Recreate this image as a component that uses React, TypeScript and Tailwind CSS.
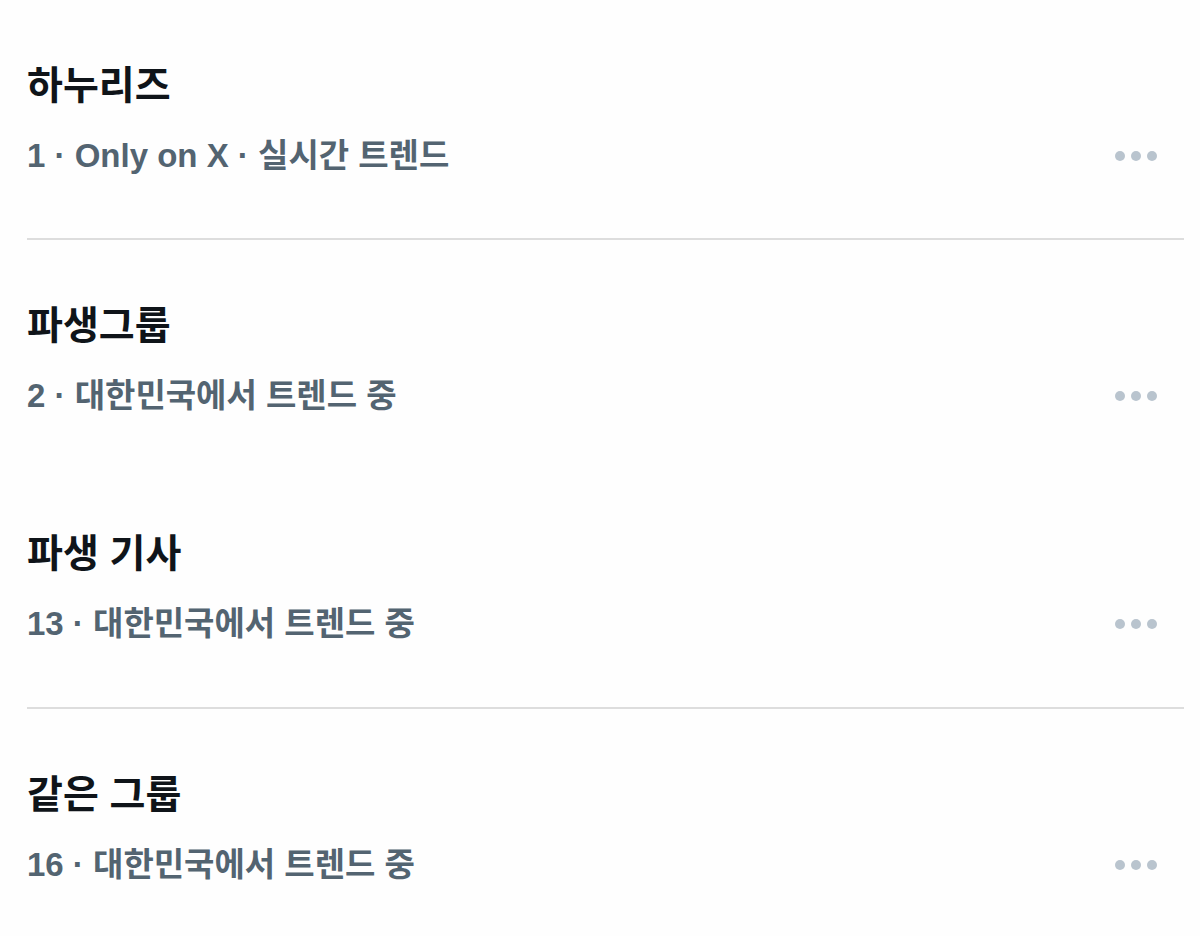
import React from "react";

interface Trend {
  title: string;
  meta: string;
  height: string;
  divider: boolean;
}

const trends: Trend[] = [
  { title: "하누리즈", meta: "1 · Only on X · 실시간 트렌드", height: "h-[238px]", divider: true },
  { title: "파생그룹", meta: "2 · 대한민국에서 트렌드 중", height: "h-[228px]", divider: false },
  { title: "파생 기사", meta: "13 · 대한민국에서 트렌드 중", height: "h-[239px]", divider: true },
  { title: "같은 그룹", meta: "16 · 대한민국에서 트렌드 중", height: "h-[227px]", divider: false },
];

function MoreDots() {
  return (
    <div className="flex items-center gap-[6px]">
      <span className="w-[10px] h-[10px] rounded-full bg-[#b9c4ce]"></span>
      <span className="w-[10px] h-[10px] rounded-full bg-[#b9c4ce]"></span>
      <span className="w-[10px] h-[10px] rounded-full bg-[#b9c4ce]"></span>
    </div>
  );
}

export default function App() {
  return (
    <div
      className="w-[1200px] h-[936px] bg-[#fefefe] overflow-hidden"
      style={{ fontFamily: '"Liberation Sans", "Noto Sans CJK KR", sans-serif' }}
    >
      {trends.map((t) => (
        <div key={t.title}>
          <div className={`${t.height} pl-[27px] pr-[43px] pt-[62px] flex flex-col`}>
            <div className="text-[39px] leading-[48px] font-bold text-[#0f1419]">{t.title}</div>
            <div className="mt-[24px] flex items-center justify-between">
              <span className="text-[33px] leading-[44px] font-bold text-[#536471]">{t.meta}</span>
              <MoreDots />
            </div>
          </div>
          {t.divider && <div className="ml-[27px] mr-[16px] h-[2px] bg-[#dddddd]"></div>}
        </div>
      ))}
    </div>
  );
}
